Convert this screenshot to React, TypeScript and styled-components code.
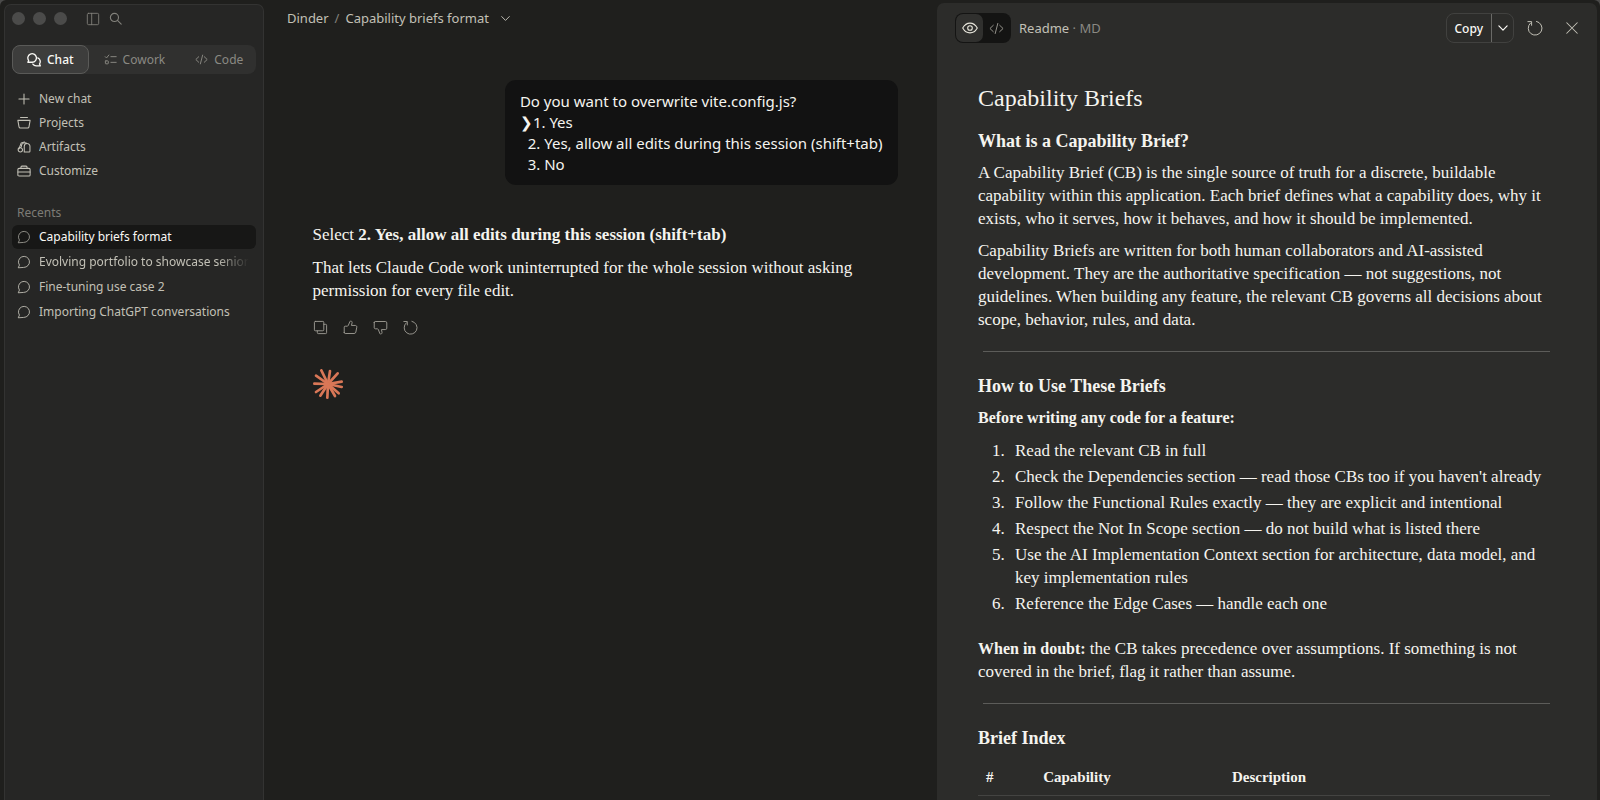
import React from "react";
import styled, { createGlobalStyle, css } from "styled-components";

const sans = `"Noto Sans", "Open Sans", sans-serif`;
const serif = `"Liberation Serif", serif`;

const GlobalStyle = createGlobalStyle`
  *, *::before, *::after { box-sizing: border-box; }
  body { margin: 0; background: #4b4b4a; color: #f5f4ef; font-family: ${sans}; }
  h1, h2, p, ol, ul { margin: 0; padding: 0; }
  button { font: inherit; color: inherit; background: none; border: 0; padding: 0; cursor: pointer; }
  a { color: inherit; text-decoration: none; }
`;

const Window = styled.div`
  display: grid;
  grid-template-columns: 260px minmax(0, 1fr) minmax(0, 660px);
  height: 100vh;
  padding: 3px 3px 0 4px;
  border-radius: 6px 6px 0 0;
  background: #1f1f1d;
  overflow: hidden;
`;

/* ---------- icons ---------- */

const Svg = styled.svg<{ $size: number; $weight?: number }>`
  display: block;
  flex: none;
  width: ${(p) => p.$size}px;
  height: ${(p) => p.$size}px;
  fill: none;
  stroke: currentColor;
  stroke-width: ${(p) => p.$weight ?? 1};
  stroke-linecap: round;
  stroke-linejoin: round;
`;

const shapes = {
  panel: <><rect x="1.5" y="1.5" width="13" height="13" rx="1.5" /><path d="M6.5 1.5v13" /></>,
  search: <><circle cx="6.7" cy="6.7" r="5" /><path d="M10.4 10.4 15 15" /></>,
  chats: <><path d="M1 10.5 1.9 8.6A4.9 4.9 0 1 1 6 10.6H1Z" /><path d="M12.3 5.6a4.6 4.6 0 0 1 2 6.9l.9 2.2H10.6a4.6 4.6 0 0 1-3.9-2" /></>,
  checklist: <><path d="m1.5 4.5 1.6 1.6L6 2.5M8.5 4.5h6.5M8.5 11.5h6.5" /><rect x="1.7" y="9.7" width="3.6" height="3.6" rx=".6" /></>,
  code: <path d="M4.6 4.6 1 8l3.6 3.4M11.4 4.6 15 8l-3.6 3.4M9.4 2.6 6.6 13.4" />,
  plus: <path d="M8 2.2v11.6M2.2 8h11.6" />,
  projects: <><path d="M4 1.8h8" /><path d="M1 5h14l-1.3 7.4a1.6 1.6 0 0 1-1.6 1.3H3.9a1.6 1.6 0 0 1-1.6-1.3Z" /></>,
  artifacts: <><path d="M2.3 10 4.8 3.4 8.6 2.2" /><circle cx="3.8" cy="11.2" r="2.5" /><path d="M8.3 13.8h5.5a1 1 0 0 0 1-1V7.2a3.2 3.2 0 0 0-6.5 0v6.6M5 7.5A4 4 0 0 1 11.5 4" /></>,
  customize: <><rect x="1" y="5" width="14" height="8.8" rx="1.3" /><path d="M4.5 5V3.6a1.2 1.2 0 0 1 1.2-1.2h4.6a1.2 1.2 0 0 1 1.2 1.2V5M1 9.2h14" /></>,
  bubble: <path d="M1.6 14.2 2.8 11.5A6.3 6.3 0 1 1 8 14.2Z" />,
  chevron: <path d="m2.5 5.2 5.5 5.6 5.5-5.6" />,
  copy: <><rect x="1.5" y="1.5" width="10" height="10" rx="1" /><path d="M11.7 4.6h1.8a1 1 0 0 1 1 1v7.9a1 1 0 0 1-1 1H5.6a1 1 0 0 1-1-1v-1.8" /></>,
  up: <path d="M1.3 13.4V7.6a1 1 0 0 1 1-1h2.2c.5 0 .8-.2 1-.6L7.4 1.7c.2-.5.6-.7 1.1-.6.9.2 1.4 1 1.2 1.9L9 5.8h4.2c1 0 1.7.9 1.5 1.9l-1 5.2a1.9 1.9 0 0 1-1.9 1.5H2.3a1 1 0 0 1-1-1Z" />,
  down: <path d="M1.3 2.6v5.8c.2.6.6 1 1.2 1h2.2c.4 0 .7.2.9.6l1.7 4.4c.2.5.6.7 1.1.6.9-.2 1.4-1 1.2-1.9L9 10.2h4.2a1.5 1.5 0 0 0 1.5-1.5V3.1a1.5 1.5 0 0 0-1.5-1.5H2.3a1 1 0 0 0-1 1Z" />,
  retry: <><path d="M9.5 1.4A6.9 6.9 0 1 1 3.5 3" /><path d="M.9 1.6H4.6V5.3" /></>,
  eye: <><path d="M.7 8C2.5 4.8 5 3.1 8 3.1S13.5 4.8 15.3 8C13.5 11.2 11 12.9 8 12.9S2.5 11.2.7 8Z" /><circle cx="8" cy="8" r="2.3" /></>,
  close: <path d="m2 2 12 12M14 2 2 14" />,
};

function Icon({ name, size = 14, weight }: { name: keyof typeof shapes; size?: number; weight?: number }) {
  return <Svg viewBox="0 0 16 16" $size={size} $weight={weight} aria-hidden="true">{shapes[name]}</Svg>;
}

const Burst = styled.svg`
  display: block;
  width: 30px;
  height: 30px;
  stroke: #d97757;
  stroke-width: 8;
  stroke-linecap: round;
`;

/* ---------- sidebar ---------- */

const Sidebar = styled.aside`
  display: flex;
  flex-direction: column;
  margin-top: 1px;
  padding: 7px;
  border: 1px solid #333332;
  border-bottom: 0;
  border-radius: 7px 7px 0 0;
  background: #262625;
  color: #c2c0b6;
  font-size: 12px;
  line-height: 16px;
`;

const WindowBar = styled.div`
  display: flex;
  align-items: center;
  gap: 8px;
  height: 13px;
  color: #82817b;
`;

const Dot = styled.span`
  width: 13px;
  height: 13px;
  border-radius: 50%;
  background: #4b4b4a;
`;

const BarButtons = styled.div`
  display: flex;
  gap: 9px;
  margin-left: 11px;
`;

const Tabs = styled.div`
  display: flex;
  justify-content: space-between;
  height: 29px;
  margin-top: 20px;
  border-radius: 8px;
  background: #30302f;
`;

const Tab = styled.button<{ $active?: boolean }>`
  display: flex;
  align-items: center;
  gap: 6px;
  padding: 0 14px;
  border: 1px solid transparent;
  border-radius: 8px;
  color: #8a8983;
  ${(p) => p.$active && css`
    background: #3d3d3c;
    border-color: #5a5a58;
    color: #faf9f5;
    font-weight: 500;
  `}
`;

const Nav = styled.nav`
  margin-top: 13px;
`;

const Item = styled.a<{ $active?: boolean }>`
  display: flex;
  align-items: center;
  gap: 8px;
  height: 24px;
  padding: 0 7px 0 5px;
  border-radius: 6px;
  ${(p) => p.$active && css`
    background: #171716;
    color: #faf9f5;
  `}
  svg { color: ${(p) => (p.$active ? "#9c9a92" : "inherit")}; }
`;

const ItemText = styled.span<{ $fade?: boolean }>`
  flex: 1;
  overflow: hidden;
  white-space: nowrap;
  ${(p) => p.$fade && css`
    mask-image: linear-gradient(to right, #000 85%, transparent);
  `}
`;

const GroupTitle = styled.h2`
  margin: 22px 5px 4px;
  color: #7d7c76;
  font-size: 12px;
  font-weight: 400;
`;

const Recents = styled.div`
  display: grid;
  gap: 1px;
`;

/* ---------- conversation ---------- */

const Main = styled.main`
  display: flex;
  flex-direction: column;
  min-width: 0;
  padding-left: 9px;
`;

const Crumbs = styled.header`
  display: flex;
  align-items: center;
  gap: 6px;
  height: 30px;
  padding-left: 14px;
  color: #c2c0b6;
  font-size: 13px;
  line-height: 18px;
`;

const Slash = styled.span`
  color: #82817b;
`;

const CrumbButton = styled.button`
  display: flex;
  align-items: center;
  gap: 11px;
`;

const Thread = styled.section`
  display: flex;
  flex-direction: column;
  width: 100%;
  max-width: 585px;
  margin: 47px auto 0;
`;

const Prompt = styled.div`
  align-self: flex-end;
  padding: 11px 15px 10px;
  border-radius: 11px;
  background: #121212;
  font-size: 15px;
  line-height: 21px;
  white-space: pre-wrap;
`;

const Reply = styled.div`
  display: grid;
  gap: 10px;
  margin-top: 38px;
  font-family: ${serif};
  font-size: 17px;
  line-height: 23px;
`;

const Actions = styled.div`
  display: flex;
  gap: 15px;
  margin-top: 18px;
  color: #9c9a92;
`;

const Mark = styled.div`
  margin-top: 34px;
`;

/* ---------- document panel ---------- */

const Panel = styled.section`
  min-width: 0;
  overflow: hidden;
  border-radius: 7px 7px 0 0;
  background: #2c2c2a;
`;

const PanelBar = styled.header`
  display: flex;
  align-items: center;
  height: 50px;
  padding: 0 18px;
  color: #c2c0b6;
  font-size: 13px;
`;

const Toggle = styled.div`
  display: flex;
  height: 30px;
  padding: 1px;
  border-radius: 8px;
  background: #141413;
`;

const ToggleButton = styled.button<{ $active?: boolean }>`
  display: grid;
  place-items: center;
  width: 27px;
  border-radius: 7px;
  color: ${(p) => (p.$active ? "#e8e6dc" : "#9c9a92")};
  background: ${(p) => (p.$active ? "#30302e" : "transparent")};
`;

const FileName = styled.p`
  flex: 1;
  margin-left: 8px;
  line-height: 18px;
`;

const Kind = styled.span`
  color: #8a8983;
`;

const CopyGroup = styled.div`
  display: flex;
  height: 30px;
  border: 1px solid #41413f;
  border-radius: 8px;
  color: #faf9f5;
`;

const CopyButton = styled.button`
  padding: 0 8px;
  font-size: 12px;
  font-weight: 500;
`;

const MoreButton = styled.button`
  display: grid;
  place-items: center;
  width: 22px;
  border-left: 1px solid #6a6a67;
`;

const BarActions = styled.div`
  display: flex;
  align-items: center;
  gap: 22px;
  margin-left: 13px;
`;

const Doc = styled.article`
  padding: 30px 47px 0 41px;
  font-family: ${serif};
  font-size: 17px;
  line-height: 23px;
`;

const Title = styled.h1`
  font-size: 24px;
  font-weight: 400;
  line-height: 30px;
`;

const Heading = styled.h2`
  margin-bottom: 8px;
  font-size: 18px;
  line-height: 24px;
`;

const Section = styled.section`
  & + & {
    margin-top: 20px;
    padding-top: 23px;
    background: linear-gradient(#5c5c59, #5c5c59) 5px 0 / 100% 1px no-repeat;
  }
  ${Title} + & { margin-top: 16px; }
`;

const Para = styled.p`
  & + & { margin-top: 9px; }
`;

const Lead = styled.strong`
  font-size: 16px;
`;

const Steps = styled.ol`
  display: grid;
  gap: 3px;
  margin: 10px 0 22px;
  padding-left: 31px;
  li { padding-left: 6px; }
`;

const Table = styled.table`
  width: 100%;
  border-collapse: collapse;
  font-size: 15px;
  line-height: 20px;
`;

const Th = styled.th<{ $width?: string }>`
  width: ${(p) => p.$width ?? "auto"};
  padding: 9px 8px 8px;
  border-bottom: 1px solid #444442;
  text-align: left;
`;

const recents = [
  { title: "Capability briefs format", active: true },
  { title: "Evolving portfolio to showcase senior", fade: true },
  { title: "Fine-tuning use case 2" },
  { title: "Importing ChatGPT conversations" },
];

const steps = [
  "Read the relevant CB in full",
  "Check the Dependencies section — read those CBs too if you haven't already",
  "Follow the Functional Rules exactly — they are explicit and intentional",
  "Respect the Not In Scope section — do not build what is listed there",
  "Use the AI Implementation Context section for architecture, data model, and key implementation rules",
  "Reference the Edge Cases — handle each one",
];

const rays = [[25, 4], [51, 6], [74, 13], [86, 38], [86, 54], [77, 73], [66, 81], [43, 86], [22, 80], [9, 69], [4, 44], [9, 20]];

export default function App() {
  return (
    <>
      <GlobalStyle />
      <Window>
        <Sidebar>
          <WindowBar>
            <Dot /><Dot /><Dot />
            <BarButtons>
              <button aria-label="Toggle sidebar"><Icon name="panel" /></button>
              <button aria-label="Search"><Icon name="search" size={13} weight={1.4} /></button>
            </BarButtons>
          </WindowBar>
          <Tabs>
            <Tab $active><Icon name="chats" weight={1.5} />Chat</Tab>
            <Tab><Icon name="checklist" size={13} weight={1.2} />Cowork</Tab>
            <Tab><Icon name="code" size={13} weight={1.2} />Code</Tab>
          </Tabs>
          <Nav>
            <Item href="#new"><Icon name="plus" weight={1.2} /><ItemText>New chat</ItemText></Item>
            <Item href="#projects"><Icon name="projects" weight={1.2} /><ItemText>Projects</ItemText></Item>
            <Item href="#artifacts"><Icon name="artifacts" weight={1.2} /><ItemText>Artifacts</ItemText></Item>
            <Item href="#customize"><Icon name="customize" weight={1.2} /><ItemText>Customize</ItemText></Item>
          </Nav>
          <GroupTitle>Recents</GroupTitle>
          <Recents>
            {recents.map((r) => (
              <Item key={r.title} href="#chat" $active={r.active}>
                <Icon name="bubble" />
                <ItemText $fade={r.fade}>{r.title}</ItemText>
              </Item>
            ))}
          </Recents>
        </Sidebar>

        <Main>
          <Crumbs>
            <a href="#dinder">Dinder</a>
            <Slash>/</Slash>
            <CrumbButton>Capability briefs format<Icon name="chevron" size={11} weight={1.4} /></CrumbButton>
          </Crumbs>
          <Thread>
            <Prompt>{"Do you want to overwrite vite.config.js?\n❯1. Yes\n  2. Yes, allow all edits during this session (shift+tab)\n  3. No"}</Prompt>
            <Reply>
              <p>Select <strong>2. Yes, allow all edits during this session (shift+tab)</strong></p>
              <p>That lets Claude Code work uninterrupted for the whole session without asking permission for every file edit.</p>
            </Reply>
            <Actions>
              <button aria-label="Copy reply"><Icon name="copy" size={15} /></button>
              <button aria-label="Good reply"><Icon name="up" size={15} /></button>
              <button aria-label="Bad reply"><Icon name="down" size={15} /></button>
              <button aria-label="Retry"><Icon name="retry" size={15} /></button>
            </Actions>
            <Mark>
              <Burst viewBox="0 0 90 90" aria-hidden="true">
                {rays.map(([x, y]) => <path key={`${x}-${y}`} d={`M45 45 ${x} ${y}`} />)}
              </Burst>
            </Mark>
          </Thread>
        </Main>

        <Panel>
          <PanelBar>
            <Toggle>
              <ToggleButton $active aria-label="Preview"><Icon name="eye" size={16} weight={1.1} /></ToggleButton>
              <ToggleButton aria-label="Source"><Icon name="code" size={15} /></ToggleButton>
            </Toggle>
            <FileName>Readme <Kind>· MD</Kind></FileName>
            <CopyGroup>
              <CopyButton>Copy</CopyButton>
              <MoreButton aria-label="More copy options"><Icon name="chevron" size={12} weight={1.6} /></MoreButton>
            </CopyGroup>
            <BarActions>
              <button aria-label="Reload"><Icon name="retry" size={16} /></button>
              <button aria-label="Close"><Icon name="close" size={14} weight={1.2} /></button>
            </BarActions>
          </PanelBar>
          <Doc>
            <Title>Capability Briefs</Title>
            <Section>
              <Heading>What is a Capability Brief?</Heading>
              <Para>A Capability Brief (CB) is the single source of truth for a discrete, buildable capability within this application. Each brief defines what a capability does, why it exists, who it serves, how it behaves, and how it should be implemented.</Para>
              <Para>Capability Briefs are written for both human collaborators and AI-assisted development. They are the authoritative specification — not suggestions, not guidelines. When building any feature, the relevant CB governs all decisions about scope, behavior, rules, and data.</Para>
            </Section>
            <Section>
              <Heading>How to Use These Briefs</Heading>
              <Para><Lead>Before writing any code for a feature:</Lead></Para>
              <Steps>{steps.map((s) => <li key={s}>{s}</li>)}</Steps>
              <Para><Lead>When in doubt:</Lead> the CB takes precedence over assumptions. If something is not covered in the brief, flag it rather than assume.</Para>
            </Section>
            <Section>
              <Heading>Brief Index</Heading>
              <Table>
                <thead>
                  <tr><Th $width="10%">#</Th><Th $width="33%">Capability</Th><Th>Description</Th></tr>
                </thead>
              </Table>
            </Section>
          </Doc>
        </Panel>
      </Window>
    </>
  );
}
